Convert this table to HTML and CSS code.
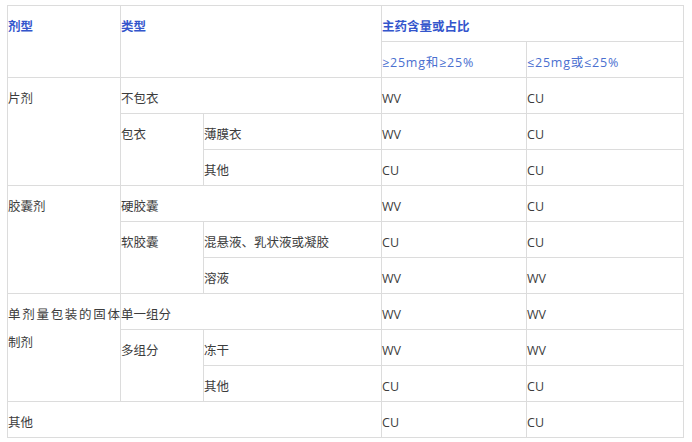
FILE: index.html
```html
<!DOCTYPE html>
<html lang="zh-CN">
<head>
<meta charset="utf-8">
<link rel="stylesheet" href="styles.css">
</head>
<body>
<table class="spec">
  <colgroup>
    <col class="c1"><col class="c2"><col class="c3"><col class="c4"><col class="c5">
  </colgroup>
  <tr>
    <th rowspan="2">剂型</th>
    <th rowspan="2" colspan="2">类型</th>
    <th colspan="2">主药含量或占比</th>
  </tr>
  <tr>
    <td class="sub">≥25mg和≥25%</td>
    <td class="sub">≤25mg或≤25%</td>
  </tr>
  <tr>
    <td rowspan="3">片剂</td>
    <td colspan="2">不包衣</td>
    <td>WV</td><td>CU</td>
  </tr>
  <tr>
    <td rowspan="2">包衣</td>
    <td>薄膜衣</td>
    <td>WV</td><td>CU</td>
  </tr>
  <tr>
    <td>其他</td>
    <td>CU</td><td>CU</td>
  </tr>
  <tr>
    <td rowspan="3">胶囊剂</td>
    <td colspan="2">硬胶囊</td>
    <td>WV</td><td>CU</td>
  </tr>
  <tr>
    <td rowspan="2">软胶囊</td>
    <td>混悬液、乳状液或凝胶</td>
    <td>CU</td><td>CU</td>
  </tr>
  <tr>
    <td>溶液</td>
    <td>WV</td><td>WV</td>
  </tr>
  <tr>
    <td rowspan="3" class="just">单剂量包装的固体制剂</td>
    <td colspan="2">单一组分</td>
    <td>WV</td><td>WV</td>
  </tr>
  <tr>
    <td rowspan="2">多组分</td>
    <td>冻干</td>
    <td>WV</td><td>WV</td>
  </tr>
  <tr>
    <td>其他</td>
    <td>CU</td><td>CU</td>
  </tr>
  <tr>
    <td colspan="3">其他</td>
    <td>CU</td><td>CU</td>
  </tr>
</table>
</body>
</html>
```
FILE: styles.css
```css
html, body {
  margin: 0;
  padding: 0;
  background: #fff;
}
body {
  padding: 5px 0 0 7px;
  font-family: "Open Sans", "Noto Sans CJK SC", sans-serif;
  font-size: 12.5px;
  color: #3c3c3c;
}
.spec {
  border-collapse: collapse;
  table-layout: fixed;
  width: 677px;
}
.c1 { width: 113px; }
.c2 { width: 83px; }
.c3 { width: 178px; }
.c4 { width: 145px; }
.c5 { width: 157px; }
.spec th, .spec td {
  border: 1px solid #dcdcdc;
  padding: 7px 0 0 0;
  height: 28px;
  line-height: 28px;
  vertical-align: top;
  text-align: left;
  box-sizing: content-box;
}
.spec th {
  color: #3355cc;
  font-weight: bold;
}
.spec .sub {
  color: #4a6fd0;
  letter-spacing: 0.8px;
}
.spec .just {
  text-align: justify;
  text-align-last: left;
  text-justify: inter-character;
}
```
